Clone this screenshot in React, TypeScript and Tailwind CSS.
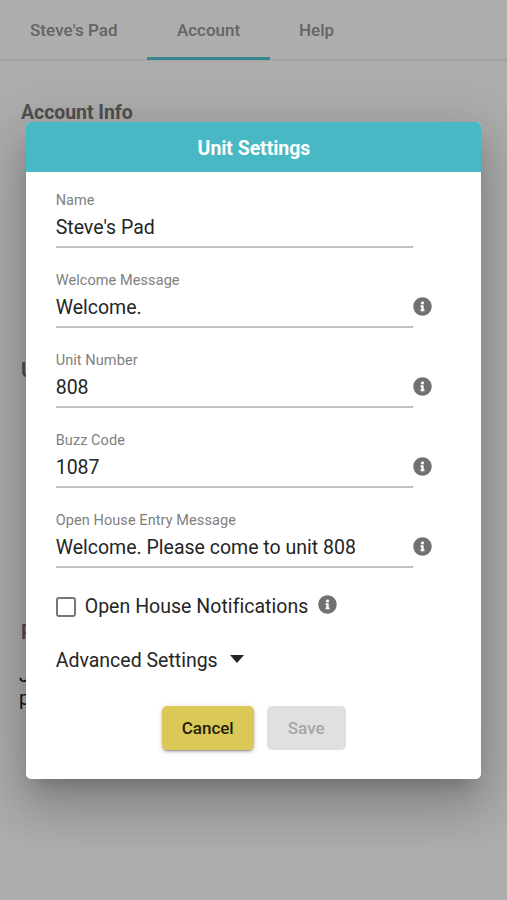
import { FaInfoCircle } from "react-icons/fa";

type FieldProps = { label: string; value: string; info?: boolean };

function Info() {
  return <FaInfoCircle className="size-[19px] shrink-0 text-[#717171]" />;
}

function Field({ label, value, info = true }: FieldProps) {
  return (
    <div className="flex h-[80.1px] items-start">
      <label className="block h-[58px] w-[357px] border-b-2 border-[#c0c0c0]">
        <span className="block h-[22px] text-[14.5px] leading-[22px] tracking-[0.08px] text-[#808080]">{label}</span>
        <span className="mt-[2px] block text-[19.5px] leading-[28px] text-[#252525]">{value}</span>
      </label>
      {info && (
        <span className="mt-[27px] w-[19px]">
          <Info />
        </span>
      )}
    </div>
  );
}

function Page() {
  return (
    <div className="h-full bg-[#adadad]">
      <nav className="flex h-[61px] items-stretch border-b-2 border-[#a2a2a2] text-[17px] font-medium leading-[61px] text-[#646464]">
        <span className="w-[147px] pl-[30px] tracking-[0.08px]">Steve's Pad</span>
        <span className="-mb-px h-[60px] w-[123px] border-b-[3px] border-[#37878f] text-center">Account</span>
        <span className="pl-[29px]">Help</span>
      </nav>
      <main className="pl-[21px] text-[19.5px] font-bold leading-6 tracking-[-0.05px] text-[#505050]">
        <h2 className="pt-[40px]">Account Info</h2>
        <h2 className="pt-[234px]">U</h2>
        <h2 className="pt-[238px]">P</h2>
        <p className="-ml-[2px] pt-[19px] leading-[23px] font-normal text-[#151515]">
          J
          <br />
          p
        </p>
      </main>
    </div>
  );
}

export default function App() {
  return (
    <div className="relative h-[900px] w-[507px] overflow-hidden font-['Roboto',sans-serif]">
      <Page />
      <section
        role="dialog"
        className="absolute left-[26.4px] top-[122px] h-[657px] w-[455px] overflow-hidden rounded-[5px] bg-white shadow-[0_13px_18px_-9px_rgba(0,0,0,0.2),0_29px_46px_4px_rgba(0,0,0,0.14),0_11px_56px_10px_rgba(0,0,0,0.12)]"
      >
        <header className="flex h-[49.5px] items-center justify-center bg-[#48b8c5] pt-[3px] text-[19.5px] font-bold tracking-[-0.06px] text-white">
          Unit Settings
        </header>
        <form className="pl-[29.3px] pt-[18.5px]">
          <Field label="Name" value="Steve's Pad" info={false} />
          <Field label="Welcome Message" value="Welcome." />
          <Field label="Unit Number" value="808" />
          <Field label="Buzz Code" value="1087" />
          <Field label="Open House Entry Message" value="Welcome. Please come to unit 808" />
          <div className="mt-[2.5px] flex h-7 items-center text-[19.5px] text-[#252525]">
            <span className="mr-[9px] size-5 rounded-[3px] border-2 border-[#777]" />
            <span className="mr-[10px] tracking-[0.03px]">Open House Notifications</span>
            <span className="-mt-[4px]">
              <Info />
            </span>
          </div>
          <div className="mt-[26px] flex h-7 items-center text-[19.5px] text-[#252525]">
            Advanced Settings
            <span className="-mt-[3px] ml-3 border-x-[7.5px] border-t-8 border-x-transparent border-t-[#252525]" />
          </div>
          <div className="ml-[106px] mt-[31px] flex gap-[13px] text-[17px] font-medium">
            <button
              type="button"
              className="h-[44px] w-[92px] rounded-[5px] bg-[#dac957] pt-[2px] text-[#231f0a] shadow-[0_3px_1px_-2px_rgba(0,0,0,0.2),0_2px_3px_rgba(0,0,0,0.18),0_1px_6px_rgba(0,0,0,0.12)]"
            >
              Cancel
            </button>
            <button type="button" disabled className="h-[44px] w-[79px] rounded-[5px] bg-[#e0e0e0] pt-[2px] text-[#a6a6a6]">
              Save
            </button>
          </div>
        </form>
      </section>
    </div>
  );
}
